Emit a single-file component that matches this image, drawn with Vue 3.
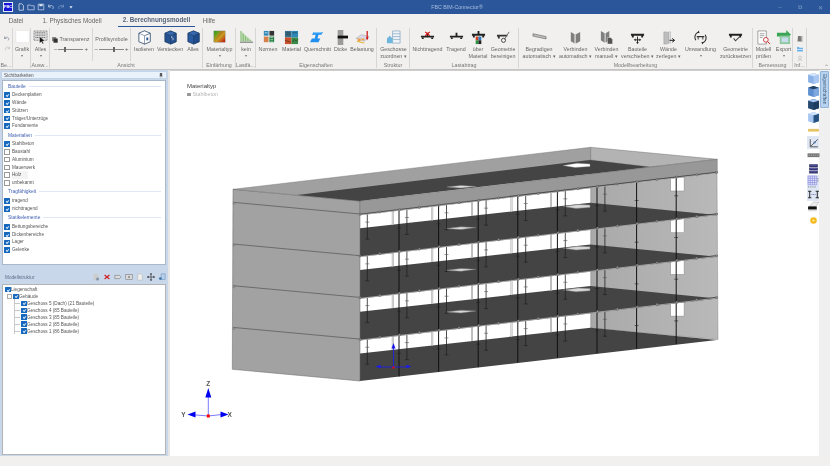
<template>
  <div class="app">
    <header class="titlebar">
      <div class="logo">FBC</div>
      <div class="qat">
        <svg v-for="q in qat" :key="q" viewBox="0 0 10 10" class="qat-icon" v-html="icons[q]"></svg>
      </div>
      <div class="app-title">FBC BIM-Connector®</div>
      <div class="win-btns">
        <span>&#8211;</span>
        <span>&#10697;</span>
        <span>&#10005;</span>
      </div>
    </header>

    <nav class="tabs">
      <span class="tab" style="width: 32px">Datei</span>
      <span class="tab" style="width: 76px">1. Physisches Modell</span>
      <span class="tab active" style="width: 77px">2. Berechnungsmodell</span>
      <span class="tab" style="width: 28px">Hilfe</span>
    </nav>

    <section class="ribbon">
      <div v-for="(g, gi) in groups" :key="gi" class="group" :style="{ width: g.w + 'px' }">
        <div class="items">
          <div v-for="(it, i) in g.items" :key="i" class="item" :class="it.sep ? 'sep' : ''" :style="{ width: it.w + 'px' }">
            <template v-if="it.stack">
              <svg v-for="s in it.stack" :key="s" class="stack-icon" viewBox="0 0 16 16" v-html="icons[s]"></svg>
            </template>
            <template v-else-if="it.slider">
              <div class="slider-title">
                <svg v-if="it.swatch" class="swatch" viewBox="0 0 10 10" v-html="icons.swatch"></svg>
                {{ it.slider }}
              </div>
              <div class="slider">
                <span>&#8211;</span>
                <i class="track"><b :style="{ left: it.pos + 'px' }"></b></i>
                <span>+</span>
              </div>
            </template>
            <template v-else>
              <svg class="icon" viewBox="0 0 16 16" v-html="icons[it.icon]"></svg>
              <span v-for="l in it.text" :key="l" class="lbl">{{ l }}</span>
              <span v-if="it.caret" class="caret">&#9662;</span>
            </template>
          </div>
        </div>
        <div class="group-label">{{ g.label }}</div>
      </div>
      <span class="collapse">&#8963;</span>
    </section>

    <main class="main">
      <aside class="side">
        <div class="dock-head">
          <span>Sichtbarkeiten</span>
          <svg class="pin" viewBox="0 0 6 8"><path d="M1.5 0h3v4l1 1H.5l1-1zM3 5v3" fill="#555" stroke="#555" stroke-width=".5" /></svg>
        </div>
        <div class="vis-box">
          <div v-for="sec in visibility" :key="sec.title">
            <div class="vis-title"><span>{{ sec.title }}</span><i></i></div>
            <label v-for="r in sec.rows" :key="r[0]" class="check-row" :class="r[0] === 'Holz' ? 'hover' : ''">
              <span class="cb" :class="r[1] ? 'on' : ''"></span>{{ r[0] }}
            </label>
          </div>
        </div>
        <div class="model-head">
          <span>Modellstruktur</span>
          <div class="model-tools">
            <svg v-for="t in modelTools" :key="t" viewBox="0 0 10 10" v-html="icons[t]"></svg>
          </div>
        </div>
        <div class="tree">
          <div v-for="n in tree" :key="n.t" class="tree-row" :class="'lvl' + n.l">
            <span v-if="n.l === 1" class="expander"></span>
            <i v-if="n.l === 2" class="branch"></i>
            <span class="cb on"></span>{{ n.t }}
          </div>
        </div>
      </aside>

      <div class="viewport">
        <div class="legend">
          <div class="legend-title">Materialtyp</div>
          <div class="legend-row"><i></i>Stahlbeton</div>
        </div>
        <svg class="scene" viewBox="170 71 649 385">
          <defs>
            <linearGradient id="backWall" x1="0" x2="1" y1="0" y2="0">
              <stop offset="0" stop-color="#a9a9a9" />
              <stop offset="1" stop-color="#b9b9b9" />
            </linearGradient>
          </defs>
          <!-- rueckwand -->
          <polygon points="590.7,160 717,172 718,339.5 590.7,328" fill="url(#backWall)" stroke="#777" stroke-width=".4" />
          <rect v-for="o in offs" :key="'d' + o" x="670.7" :y="177 + o" width="13.4" height="14" fill="#fff" stroke="#8a8a8a" stroke-width=".5" />
          <!-- decken -->
          <polygon v-for="o in offs" :key="'f' + o" :points="pts([[360, 228.3 + o], [590.5, 202.7 + o], [717, 215 + o], [360, 256 + o]])" fill="#444" />
          <polygon v-for="h in floorHoles" :key="h.k" :points="pts(h.p)" fill="#d8d8d8" stroke="#777" stroke-width=".5" />
          <!-- aussen links -->
          <polygon points="233,189.3 360,201 360,381 232.3,369.3" fill="#a2a2a2" stroke="#666" stroke-width=".5" />
          <line v-for="o in offs" :key="'l' + o" x1="233" :y1="202.3 + o" x2="360" :y2="214 + o" stroke="#555" stroke-width=".7" />
          <circle v-for="o in offs" :key="'lc' + o" cx="234" :cy="203.5 + o" r="1" fill="#aaa" stroke="#555" stroke-width=".4" />
          <!-- dach -->
          <polygon points="233,189.3 590.7,147.3 590.7,160 360,201" fill="#a0a0a0" stroke="#666" stroke-width=".4" />
          <polygon points="590.7,147.3 717.3,159.3 650,167 590.7,160" fill="#b3b3b3" stroke="#666" stroke-width=".4" />
          <polygon points="297,195 590,160 650,167 360,201" fill="#444" />
          <polygon points="447,187 461,185.400 476,186.500 461,188" fill="#ddd" stroke="#888" stroke-width=".4" />
          <polygon points="563,165.500 577,163.200 590,164 590,166.500 575,167.500" fill="#fff" stroke="#888" stroke-width=".4" />
          <polygon points="360,201 717.3,159.3 717.3,172 360,214" fill="#989898" stroke="#666" stroke-width=".4" />
          <!-- stuetzen -->
          <g v-for="p in pillars" :key="p.k">
            <line :x1="p.x" :y1="p.y1" :x2="p.x" :y2="p.y2" stroke="#8a8a8a" stroke-width="1.700" />
            <line :x1="p.x" :y1="p.y1" :x2="p.x" :y2="p.y2" stroke="#f4f4f4" stroke-width=".8" />
          </g>
          <line v-for="c in shortCols" :key="c.k" :x1="c.x" :y1="c.y" :x2="c.x" :y2="c.y + 26" stroke="#222" stroke-width=".8" />
          <line v-for="c in shortCols" :key="c.k + 't'" :x1="c.x - 2" :y1="c.y + 26" :x2="c.x + 2" :y2="c.y + 26" stroke="#222" stroke-width=".7" />
          <line v-for="c in shortCols" :key="c.k + 'm'" :x1="c.x - 2" :y1="c.y + 9" :x2="c.x + 2" :y2="c.y + 9" stroke="#555" stroke-width=".6" />
          <line v-for="c in longCols" :key="c.k" :x1="c.x" :y1="c.y1" :x2="c.x" :y2="c.y2" stroke="#111" stroke-width="1" />
          <line v-for="t in longTicks" :key="t.k" :x1="t.x - 2" :y1="t.y" :x2="t.x + 2" :y2="t.y" stroke="#222" stroke-width=".6" />
          <!-- unterzuege -->
          <g v-for="o in offs" :key="'b' + o">
            <line x1="360" :y1="214.5 + o" x2="717.5" :y2="172.5 + o" stroke="#444" stroke-width="1.700" />
            <line x1="360" :y1="215 + o" x2="717.5" :y2="173 + o" stroke="#ddd" stroke-width=".6" />
          </g>
          <circle v-for="n in nodes" :key="n.k" :cx="n.x" :cy="n.y" r="1.100" fill="#999" stroke="#444" stroke-width=".4" />
          <!-- lokale achsen -->
          <g stroke="#1a1af0" fill="#1a1af0">
            <line x1="393.5" y1="367.5" x2="393.5" y2="347" stroke-width=".8" />
            <line x1="379" y1="367" x2="408" y2="367" stroke-width=".8" />
            <path d="M393.5 343l-2 5.500h4zM375.500 366.500l5-1.800v3.600zM411.500 366.500l-5-1.800v3.600z" stroke="none" />
          </g>
          <rect x="392.5" y="366.5" width="2" height="2" fill="#f00" />
          <!-- koordinatensystem -->
          <g stroke="#2222ff" fill="#0000f0">
            <line x1="208.3" y1="416" x2="208.3" y2="392" stroke="#7a7aff" stroke-width="1" />
            <line x1="190" y1="414.5" x2="208.3" y2="416" stroke="#7a7aff" stroke-width="1" />
            <line x1="208.3" y1="416" x2="222" y2="414.5" stroke="#7a7aff" stroke-width="1" />
            <path d="M208.300 388l-3 9.500h6zM187.500 414.500l8-3v6zM228.500 414.500l-8-3v6z" stroke="none" />
          </g>
          <rect x="206.8" y="414.5" width="3" height="3" fill="#f00" />
          <text x="208.3" y="386" class="axis" text-anchor="middle">Z</text>
          <text x="183.5" y="416.5" class="axis" text-anchor="middle">Y</text>
          <text x="229.7" y="416.5" class="axis" text-anchor="middle">X</text>
        </svg>
        <div class="view-tools">
          <div v-for="(t, i) in viewTools" :key="i" class="vt" :class="t.on ? 'on' : ''">
            <svg viewBox="0 0 12 12" v-html="icons[t.i]"></svg>
          </div>
        </div>
      </div>

      <div class="rail">
        <div class="rail-tab">Eigenschaften</div>
      </div>
    </main>

    <footer class="status"></footer>
  </div>
</template>

<script setup>
const beam = '<path d="M1 6h14v2H1zM7 3h2v3H7z" fill="#222"/><path d="M2 8h2v1.500H2zM12 8h2v1.500h-2z" fill="#222"/>';
const cube = (a, b, c) => `<path d="M8 1l6 2.500v9L8 15l-6-2.500v-9z" fill="${c}" stroke="#17375e" stroke-width=".8"/><path d="M8 6l6-2.500v9L8 15z" fill="${a}" stroke="#17375e" stroke-width=".5"/><path d="M8 1l6 2.500L8 6 2 3.500z" fill="${b}" stroke="#17375e" stroke-width=".5"/>`;
const small = (top, left, right) => `<path d="M6 1l5 1.500v7L6 11 1 9.500v-7z" fill="${left}"/><path d="M6 4l5-1.500v7L6 11z" fill="${right}"/><path d="M6 1l5 1.500L6 4 1 2.500z" fill="${top}"/>`;

const icons = {
  page: '<path d="M2.500 1h3.500l2 2v6h-5.500z" fill="none" stroke="#fff" stroke-width=".8"/>',
  open: '<path d="M1 2.500h3l1 1h4v5H1z" fill="none" stroke="#dfe8f5" stroke-width=".8"/>',
  save: '<path d="M1.500 1.500h7v7h-7z" fill="none" stroke="#dfe8f5" stroke-width=".8"/><path d="M3 1.500h4v2.500H3z" fill="#dfe8f5"/>',
  undoW: '<path d="M2 4.500c2-2 5-2 6 1l-1 2M2 2v3h3" fill="none" stroke="#dfe8f5" stroke-width=".8"/>',
  redoW: '<path d="M8 4.500c-2-2-5-2-6 1l1 2M8 2v3H5" fill="none" stroke="#8fa9d0" stroke-width=".8"/>',
  more: '<path d="M3 4h4L5 7z" fill="#dfe8f5"/>',
  undo: '<path d="M3 7c3-4 8-3 9 1l-2 3M3 3v4h4" fill="none" stroke="#7c8a9a" stroke-width="1.400"/>',
  redo: '<path d="M13 7c-3-4-8-3-9 1l2 3M13 3v4H9" fill="none" stroke="#b9c0c8" stroke-width="1.400"/>',
  white: '<rect x="1" y=".5" width="14" height="13" fill="#fff" stroke="#d8d8d8" stroke-width=".4"/>',
  select: '<rect x="1" y="1" width="14" height="10" fill="#ddd" stroke="#555" stroke-width=".7" stroke-dasharray="1 .6"/><path d="M2.500 3h11M2.500 5.500h11M2.500 8h11" stroke="#666" stroke-dasharray="1.200 .6"/><path d="M7 7l0 7 2-1.500 1.200 2.500 1.200-.6-1.200-2.400 2.500-.3z" fill="#111" stroke="#fff" stroke-width=".4"/>',
  swatch: '<rect x="0" y="0" width="7" height="7" fill="#888"/><rect x="2.500" y="2.500" width="7" height="7" fill="#333"/>',
  isolate: cube('#fff', '#fff', '#fff') + '<path d="M10 8h2v3h-2z" fill="#27518f"/>',
  hide: cube('#27518f', '#3868ad', '#27518f') + '<path d="M10 6.500c-1.500 0-1.500 2 0 2s1.500 2 0 2" fill="none" stroke="#dfe8f5" stroke-width=".7"/>',
  all: cube('#204c8c', '#3868ad', '#2a5a9f'),
  mat: '<defs><linearGradient id="gr1" x1="0" x2="1" y1="0" y2="1"><stop offset="0" stop-color="#20a020"/><stop offset=".55" stop-color="#c8a020"/><stop offset="1" stop-color="#c01010"/></linearGradient></defs><rect x="2" y="1" width="12" height="12" fill="url(#gr1)" stroke="#666" stroke-width=".3"/><path d="M2 13l7-12h5z" fill="#e34a1a" opacity=".35"/>',
  load: '<path d="M2 1l12 11H2z" fill="#bcdcb0"/><path d="M2 1v11M4.500 4v8M7 6.500V12M9.500 8.500V12M12 10.500V12" stroke="#6fae5f" stroke-width=".8"/><path d="M1 13h14" stroke="#555" stroke-width=".9"/>',
  norm: '<rect x="3" y="1" width="5" height="5" fill="#2e8ab8"/><rect x="9" y="1" width="5" height="5" fill="#333"/><rect x="3" y="7" width="5" height="6" fill="#d8804a"/><path d="M9 7h5v6H9z" fill="#1a7a3a"/><path d="M10 8h3M10 10h3M10 12h3" stroke="#fff" stroke-width=".6"/><path d="M4 3h3" stroke="#fff" stroke-width=".7"/>',
  material: '<rect x="1" y="1" width="7" height="7" fill="#38708c"/><rect x="8" y="1" width="7" height="7" fill="#2c88b8"/><rect x="1" y="8" width="7" height="7" fill="#c8502a"/><rect x="8" y="8" width="7" height="7" fill="#3a8a48"/><path d="M2 3h5M2 5h5M9 3h5M1 11l6 2M9 13l2-3 2 2 2-2" stroke="#222" stroke-width=".5" fill="none"/>',
  section: '<path d="M4 2h10l-2 3H9l-1 4h3l-2 4H0l2-4h3l1-4H2z" fill="#1f8ff0"/><path d="M4 2h10l-2 1.500H4z" fill="#7cc6ff"/>',
  thick: '<rect x="5" y="0" width="6" height="16" fill="#9a9a9a"/><rect x="5" y="6" width="11" height="3" fill="#111"/>',
  loadB: '<path d="M1 9l6-4 8 2-5 5z" fill="#d8d8e8" stroke="#888" stroke-width=".4"/><path d="M3 9h3v3H3zM7 9h3v2H7z" fill="#f0a040"/><path d="M13 1v8" stroke="#d01010" stroke-width="1.300"/><path d="M11.500 8h3L13 11z" fill="#d01010"/><path d="M2 12l8 2" stroke="#e0b020"/>',
  storey: '<path d="M7 1h8v13H7z" fill="#eef3f8" stroke="#7fa0bb" stroke-width=".7"/><path d="M7 4h8M7 7h8M7 10h8" stroke="#7fa0bb" stroke-width=".7"/><path d="M1 9l3-3 3 3v5H1z" fill="#6fb6de"/>',
  nontr: beam + '<path d="M5.500 2l5 4M10.500 2l-5 4" stroke="#e01010" stroke-width="1.300"/>',
  tr: beam,
  overMat: '<path d="M1 4h14v2H1zM7 1h2v3H7zM2 6h2v2H2zM12 6h2v2h-2z" fill="#222"/><rect x="5" y="7" width="3" height="4" fill="#d04020"/><rect x="8" y="7" width="3" height="4" fill="#2a7ac0"/><rect x="5" y="11" width="3" height="4" fill="#2a9040"/><rect x="8" y="11" width="3" height="4" fill="#222"/>',
  clean: '<path d="M1 5h11v2H1zM2 7h2v2H2z" fill="#333"/><path d="M14 2L9 10" stroke="#666" stroke-width="1"/><circle cx="8" cy="11" r="2.200" fill="none" stroke="#444"/>',
  straight: '<path d="M1 4l14 3v2.500L1 6.500z" fill="#c0c0c0" stroke="#555" stroke-width=".6"/>',
  conn: '<path d="M3 2l4 2.500v10L3 12zM13 2L8.500 4.500v10l4.500-2.500z" fill="#7f7f7f"/><path d="M7 4.500h1.500v10H7z" fill="#c4c4c4"/>',
  connM: '<path d="M2 1l4 2.500v10L2 11zM11 1L7 3.500v10l4-2.500z" fill="#7f7f7f"/><path d="M9 8h3.500l2 2v5H9z" fill="#555" stroke="#fff" stroke-width=".4"/>',
  move: '<path d="M1 4h14v2H1zM2 6h2v2H2zM12 6h2v2h-2z" fill="#222"/><path d="M8 7v7M5.500 10.500h5" stroke="#222"/><path d="M8 15l-1.500-2h3zM4 10.500l2-1.500v3zM12 10.500l-2-1.500v3z" fill="#222"/>',
  split: '<path d="M3 2h3l2 1v11l-2 1H3z" fill="#bdbdbd" stroke="#888" stroke-width=".4"/><path d="M8 2h2v12H8z" fill="#e0e0e0" stroke="#888" stroke-width=".4"/><path d="M9 11h5M12 9l2.500 2L12 13" fill="none" stroke="#111" stroke-width="1"/>',
  conv: '<path d="M3 11a6 6 0 0 1 3-9M13 5a6 6 0 0 1-3 9" fill="none" stroke="#222" stroke-width="1.100"/><path d="M6 .500l1 2.500-2.500.5zM10 15.500l-1-2.500 2.500-.5z" fill="#222"/><path d="M4 6.500h8v1.200H4zM5 7.700h1v2.500H5zM10 7.700h1v2.500h-1z" fill="#333"/>',
  reset: '<path d="M1 4h14v2H1zM2 6h2v2H2zM12 6h2v2h-2z" fill="#222"/><path d="M6 9l2 2.500 4-4" fill="none" stroke="#444" stroke-width="1.100"/>',
  check: '<path d="M2 1h9v14H2z" fill="#fff" stroke="#777" stroke-width=".7"/><path d="M4 4h5M4 6h5M4 8h3" stroke="#777" stroke-width=".7"/><circle cx="10.500" cy="10.500" r="2.500" fill="#fff" stroke="#c02020" stroke-width=".9"/><path d="M12.500 12.500l2.500 2.500" stroke="#c02020"/>',
  export: '<path d="M1 3h10V0l5 5-5 4V7H1z" fill="#3aa655"/><rect x="4" y="6" width="11" height="9" fill="#8fc8a0"/><rect x="6" y="8" width="7" height="5" fill="#c8dcee"/>',
  book: '<path d="M4 2h8l-1 11H3z" fill="#777"/><path d="M9 2h4v12h-2z" fill="#aaa"/>',
  folder: '<path d="M2 4h4l1 1.500h7V13H2z" fill="#6db2e8"/><path d="M2 8h12v1.200H2z" fill="#fff"/>',
  person: '<circle cx="8" cy="5" r="3" fill="none" stroke="#a0a8b0"/><path d="M3 14c0-6 10-6 10 0z" fill="none" stroke="#a0a8b0"/>',
  fileAdd: '<path d="M2 1h4l2 2v6H2z" fill="#ccc"/><circle cx="7" cy="7.500" r="2" fill="#89a"/>',
  del: '<path d="M2 2.500l6 5M8 2.500l-6 5" stroke="#d02020" stroke-width="1.400"/>',
  tag: '<path d="M1 3h6l2 2-2 2H1z" fill="#ddd" stroke="#666" stroke-width=".6"/>',
  img: '<rect x="1" y="2" width="8" height="6" fill="#ddd" stroke="#666" stroke-width=".6"/><circle cx="5" cy="5" r="1.500" fill="#999"/>',
  paste: '<path d="M2 1h4l2 2v6H2z" fill="#eee" stroke="#aaa" stroke-width=".6"/>',
  moveB: '<path d="M5 .500v9M.500 5h9" stroke="#333" stroke-width=".8"/><path d="M5 0l1.500 2h-3zM5 10l1.500-2h-3zM0 5l2-1.500v3zM10 5L8 3.500v3z" fill="#333"/>',
  search: '<path d="M4 1h5v7H4z" fill="#b8d0ec" stroke="#47a" stroke-width=".5"/><circle cx="3" cy="7" r="1.800" fill="#47a"/>',
  v1: small('#d5e6fb', '#8db2e8', '#a9c8f2'),
  v2: small('#23405f', '#5d8fd1', '#7fa8df'),
  v3: small('#a8c8f4', '#24486f', '#1d3c60'),
  v4: small('#cfe2fa', '#a6c6f0', '#25517f'),
  bar: '<rect x="1" y="4.500" width="10" height="2.500" fill="#e8c468"/>',
  dim: '<path d="M3 10L10 3M3 3v7h7" fill="none" stroke="#555" stroke-width=".9"/><circle cx="7" cy="6" r="1" fill="#47a"/>',
  grey: '<rect x=".5" y="4" width="11" height="3.500" fill="#777"/><path d="M1.500 5.700h9" stroke="#ccc" stroke-dasharray="1 1" stroke-width=".7"/>',
  coil: '<path d="M2 2h8v2.500H2zM2 5h8v2.500H2zM2 8h8v2.500H2z" fill="#34346e"/><path d="M3 3h6M3 6h6M3 9h6" stroke="#6a6ac0" stroke-width=".6"/>',
  grid: '<path d="M1 1h8v8H1zM1 3h8M1 5h8M1 7h8M3 1v8M5 1v8M7 1v8" fill="none" stroke="#7a7ae0" stroke-width=".5"/><path d="M10 3v3M1 11h7" stroke="#555" stroke-dasharray="1 1" stroke-width=".7"/>',
  ii: '<path d="M1 3h3M2.500 3v6M1 9h3M8 3h3M9.500 3v6M8 9h3" stroke="#222" stroke-width=".9"/><path d="M4 6h4" stroke="#66a" stroke-width=".7" stroke-dasharray="1 .5"/>',
  erase: '<path d="M2 5l4-4h5L8 5z" fill="#eee" stroke="#999" stroke-width=".4"/><path d="M1 5h8v3H1z" fill="#111"/><path d="M1 8h8v1.500H1z" fill="#ddd"/>',
  coin: '<circle cx="6" cy="6" r="3" fill="#f4b91e"/><circle cx="6" cy="6" r="1" fill="#fff0b0"/>',
};

const qat = ['page', 'open', 'save', 'undoW', 'redoW', 'more'];

const groups = [
  { label: 'Be...', w: 13, items: [{ w: 13, stack: ['undo', 'redo'] }] },
  { label: '', w: 18, items: [{ w: 18, icon: 'white', text: ['Grafik'], caret: true }] },
  { label: 'Ausw...', w: 19, items: [{ w: 19, icon: 'select', text: ['Alles'], caret: true }] },
  {
    label: 'Ansicht', w: 153, items: [
      { w: 43, slider: 'Transparenz', swatch: true, pos: 6, sep: true },
      { w: 38, slider: 'Profilsymbole', pos: 14, sep: true },
      { w: 26, icon: 'isolate', text: ['Isolieren'] },
      { w: 26, icon: 'hide', text: ['Verstecken'] },
      { w: 20, icon: 'all', text: ['Alles'] },
    ],
  },
  { label: 'Einfärbung', w: 33, items: [{ w: 33, icon: 'mat', text: ['Materialtyp'], caret: true }] },
  { label: 'Lastfä...', w: 20, items: [{ w: 20, icon: 'load', text: ['kein'], caret: true }] },
  {
    label: 'Eigenschaften', w: 121, items: [
      { w: 24, icon: 'norm', text: ['Normen'] },
      { w: 23, icon: 'material', text: ['Material'] },
      { w: 29, icon: 'section', text: ['Querschnitt'] },
      { w: 17, icon: 'thick', text: ['Dicke'] },
      { w: 26, icon: 'loadB', text: ['Belastung'] },
    ],
  },
  { label: 'Struktur', w: 33, items: [{ w: 33, icon: 'storey', text: ['Geschosse', 'zuordnen ▾'] }] },
  {
    label: 'Lastabtrag', w: 109, items: [
      { w: 35, icon: 'nontr', text: ['Nichttragend'] },
      { w: 22, icon: 'tr', text: ['Tragend'] },
      { w: 22, icon: 'overMat', text: ['über', 'Material'] },
      { w: 28, icon: 'clean', text: ['Geometrie', 'bereinigen'] },
    ],
  },
  {
    label: 'Modellbearbeitung', w: 234, items: [
      { w: 40, icon: 'straight', text: ['Begradigen', 'automatisch ▾'] },
      { w: 33, icon: 'conn', text: ['Verbinden', 'automatisch ▾'] },
      { w: 29, icon: 'connM', text: ['Verbinden', 'manuell ▾'] },
      { w: 33, icon: 'move', text: ['Bauteile', 'verschieben ▾'] },
      { w: 29, icon: 'split', text: ['Wände', 'zerlegen ▾'] },
      { w: 35, icon: 'conv', text: ['Umwandlung'], caret: true },
      { w: 35, icon: 'reset', text: ['Geometrie', 'zurücksetzen'] },
    ],
  },
  {
    label: 'Bemessung', w: 40, items: [
      { w: 21, icon: 'check', text: ['Modell', 'prüfen'] },
      { w: 19, icon: 'export', text: ['Export'], caret: true },
    ],
  },
  { label: 'Inf...', w: 14, items: [{ w: 14, stack: ['book', 'folder', 'person'] }] },
];

const visibility = [
  { title: 'Bauteile', rows: [['Deckenplatten', 1], ['Wände', 1], ['Stützen', 1], ['Träger/Unterzüge', 1], ['Fundamente', 1]] },
  { title: 'Materialien', rows: [['Stahlbeton', 1], ['Baustahl', 0], ['Aluminium', 0], ['Mauerwerk', 0], ['Holz', 0], ['unbekannt', 0]] },
  { title: 'Tragfähigkeit', rows: [['tragend', 1], ['nichttragend', 1]] },
  { title: 'Statikelemente', rows: [['Bettungsbereiche', 1], ['Dickenbereiche', 1], ['Lager', 1], ['Gelenke', 1]] },
];

const modelTools = ['fileAdd', 'del', 'tag', 'img', 'paste', 'moveB', 'search'];

const tree = [
  { t: 'Liegenschaft', l: 0 },
  { t: 'Gebäude', l: 1 },
  { t: 'Geschoss 5 (Dach) (21 Bauteile)', l: 2 },
  { t: 'Geschoss 4 (85 Bauteile)', l: 2 },
  { t: 'Geschoss 3 (85 Bauteile)', l: 2 },
  { t: 'Geschoss 2 (85 Bauteile)', l: 2 },
  { t: 'Geschoss 1 (86 Bauteile)', l: 2 },
];

const viewTools = [
  { i: 'v1' }, { i: 'v2' }, { i: 'v3' }, { i: 'v4' }, { i: 'bar' }, { i: 'dim', on: true },
  { i: 'grey' }, { i: 'coil' }, { i: 'grid', on: true }, { i: 'ii', on: true }, { i: 'erase' }, { i: 'coin' },
];

// Gebaeude: Geschosse wiederholen sich mit festem Versatz
const STEP = 41.7;
const offs = [0, STEP, STEP * 2, STEP * 3];
const pts = (list) => list.map((p) => p.join(',')).join(' ');
const slabY = (x, o) => 214 - 0.1176 * (x - 360) + o;
const floorY = (x, o) => 228.3 - 0.111 * (x - 360) + o;
const bottomY = (x) => 381 - 0.1165 * (x - 360);

const floorHoles = [];
offs.slice(0, 3).forEach((o) => {
  floorHoles.push({ k: 'a' + o, p: [[446, 228.6 + o], [461, 226.8 + o], [476, 227.6 + o], [461, 229.6 + o]] });
  floorHoles.push({ k: 'b' + o, p: [[563, 206.6 + o], [578, 204.6 + o], [590, 205 + o], [590, 207.4 + o], [576, 208.4 + o]] });
});

const longCols = [];
const longTicks = [];
const shortCols = [];
const pillars = [];
const nodes = [];
for (let n = 0; n < 8; n++) {
  const x = 399 + 39.6 * n;
  longCols.push({ k: 'lc' + n, x, y1: slabY(x, 0), y2: bottomY(x) });
  offs.forEach((o) => longTicks.push({ k: `t${n}-${o}`, x, y: slabY(x, o) + 19 }));
}
offs.forEach((o) => {
  for (let n = 0; n < 7; n++) {
    const x = 367.3 + 39.6 * n;
    shortCols.push({ k: `s${n}-${o}`, x, y: slabY(x, o) });
  }
  for (let n = 0; n < 5; n++) {
    const x = 392.7 + 39.6 * n;
    pillars.push({ k: `p${n}-${o}`, x, y1: slabY(x, o), y2: floorY(x, o) });
  }
  for (let x = 360; x < 718; x += 19.8) {
    nodes.push({ k: `n${x}-${o}`, x, y: slabY(x, o) + 0.3 });
  }
});
</script>

<style scoped>
.app {
  width: 830px;
  height: 466px;
  display: flex;
  flex-direction: column;
  overflow: hidden;
  background: #f1f0ef;
  font-family: "Liberation Sans", Arial, sans-serif;
  color: #555;
  filter: blur(0.3px);
}

.titlebar {
  height: 14px;
  flex: none;
  display: flex;
  align-items: center;
  background: #2b579a;
  position: relative;
}
.logo {
  width: 10px;
  height: 10px;
  margin-left: 3px;
  background: #1414d8;
  border: 1px solid #dfe6f5;
  box-sizing: border-box;
  color: #fff;
  font-size: 4px;
  font-weight: bold;
  line-height: 8px;
  text-align: center;
}
.qat {
  display: flex;
  gap: 2px;
  margin-left: 4px;
}
.qat-icon {
  width: 8px;
  height: 8px;
}
.app-title {
  position: absolute;
  left: 0;
  right: 0;
  top: 3px;
  padding-left: 84px;
  text-align: center;
  font-size: 5.300px;
  line-height: 8px;
  color: #a7bcdc;
}
.win-btns {
  margin-left: auto;
  width: 60px;
  display: flex;
  font-size: 6px;
  color: #7f9cc6;
}
.win-btns span {
  width: 20px;
  text-align: center;
}

.tabs {
  height: 13px;
  flex: none;
  display: flex;
  background: #f1f0ef;
  font-size: 6.300px;
  color: #666;
}
.tab {
  margin-right: 2px;
  text-align: center;
  line-height: 13px;
  white-space: nowrap;
}
.tab.active {
  margin-left: 6px;
  margin-right: 0;
  font-weight: bold;
  color: #56657a;
  border-bottom: 1px solid #2b579a;
  box-sizing: border-box;
  line-height: 12px;
}

.ribbon {
  height: 43px;
  flex: none;
  display: flex;
  background: #f1f0ef;
  border-bottom: 1px solid #c4c4c4;
  box-sizing: border-box;
  position: relative;
}
.group {
  flex: none;
  display: flex;
  flex-direction: column;
  border-right: 1px solid #d6d6d6;
  box-sizing: border-box;
  margin: 1px 0;
}
.items {
  height: 33px;
  flex: none;
  display: flex;
  overflow: hidden;
}
.item {
  flex: none;
  display: flex;
  flex-direction: column;
  align-items: center;
  padding-top: 2px;
  box-sizing: border-box;
}
.item.sep {
  border-right: 1px solid #d6d6d6;
}
.icon {
  width: 15px;
  height: 15px;
  flex: none;
}
.stack-icon {
  width: 8px;
  height: 8px;
  margin-bottom: 2px;
  flex: none;
}
.stack-icon:first-child {
  margin-top: 5px;
}
.lbl {
  font-size: 5.300px;
  line-height: 7px;
  white-space: nowrap;
  color: #666;
}
.icon + .lbl {
  margin-top: 1px;
}
.caret {
  font-size: 4px;
  line-height: 6px;
  color: #777;
}
.slider-title {
  display: flex;
  align-items: center;
  gap: 1px;
  margin-top: 6px;
  font-size: 5.400px;
  white-space: nowrap;
  color: #666;
  line-height: 7px;
}
.swatch {
  width: 6px;
  height: 6px;
}
.slider {
  display: flex;
  align-items: center;
  gap: 1px;
  margin-top: 3px;
  font-size: 6px;
  line-height: 7px;
  color: #555;
}
.track {
  position: relative;
  display: block;
  width: 25px;
  height: 1px;
  background: #888;
}
.track b {
  position: absolute;
  top: -2px;
  width: 2px;
  height: 5px;
  background: #666;
}
.group-label {
  height: 8px;
  font-size: 5.300px;
  line-height: 8px;
  text-align: center;
  color: #777;
  white-space: nowrap;
}
.collapse {
  position: absolute;
  right: 1px;
  bottom: -1px;
  font-size: 6px;
  color: #888;
}

.main {
  flex: 1;
  min-height: 0;
  display: flex;
}

.side {
  width: 170px;
  flex: none;
  display: flex;
  flex-direction: column;
  background: #c9d7ea;
  box-sizing: border-box;
  padding-top: 1px;
  border-right: 2px solid #e6e6e6;
}
.dock-head {
  height: 8px;
  flex: none;
  margin: 0 1px;
  padding: 0 3px 0 2px;
  display: flex;
  justify-content: space-between;
  align-items: center;
  background: #e9f2fb;
  border: 1px solid #c3d4e6;
  box-sizing: border-box;
  font-size: 4.700px;
  color: #555;
}
.pin {
  width: 4px;
  height: 5px;
}
.vis-box {
  height: 185px;
  flex: none;
  margin: 1px 2px 0;
  padding: 0 1px;
  background: #fff;
  border: 1px solid #a9b8c8;
  box-sizing: border-box;
}
.vis-title {
  height: 10.300px;
  display: flex;
  align-items: center;
  gap: 3px;
  padding-left: 4px;
  font-size: 4.900px;
  color: #3f5fb0;
}
.vis-title i {
  flex: 1;
  height: 1px;
  margin-right: 3px;
  background: #dfe6f5;
}
.check-row {
  height: 7.750px;
  display: flex;
  align-items: center;
  gap: 2.500px;
  font-size: 4.650px;
  line-height: 7.750px;
  color: #555;
}
.check-row.hover {
  background: linear-gradient(90deg, #fff 0, #fff 8px, #f3f3f3 8px, #f3f3f3 24px, #fff 24px);
}
.cb {
  position: relative;
  width: 5.500px;
  height: 5.500px;
  flex: none;
  box-sizing: border-box;
  border: 0.6px solid #999;
  background: #fff;
  border-radius: 0.5px;
}
.cb.on {
  background: #1668bd;
  border-color: #1668bd;
}
.cb.on::after {
  content: "";
  position: absolute;
  left: 1.200px;
  top: 0.800px;
  width: 2.400px;
  height: 1.200px;
  border-left: 0.5px solid #cfe2f7;
  border-bottom: 0.5px solid #cfe2f7;
  transform: rotate(-45deg);
}
.model-head {
  height: 19px;
  flex: none;
  padding: 5px 2px 0 5px;
  box-sizing: border-box;
  display: flex;
  align-items: center;
  justify-content: space-between;
  font-size: 4.700px;
  color: #5a6e8a;
}
.model-tools {
  display: flex;
  gap: 3px;
}
.model-tools svg {
  width: 8px;
  height: 8px;
}
.tree {
  flex: 1;
  margin: 0 2px 1px 2px;
  padding: 1px 2px 1px 2px;
  background: #fff;
  border: 1px solid #b4b4b4;
  box-sizing: border-box;
}
.tree-row {
  height: 6.950px;
  display: flex;
  align-items: center;
  font-size: 4.650px;
  color: #555;
  white-space: nowrap;
}
.tree-row .cb {
  margin-right: 0.500px;
}
.lvl1 {
  padding-left: 2px;
}
.lvl2 {
  padding-left: 10px;
}
.expander {
  width: 3px;
  height: 3px;
  margin-right: 1px;
  border: 0.5px solid #aaa;
}
.branch {
  position: relative;
  width: 6px;
  height: 0.6px;
  background: #c8c8c8;
  margin-right: 1px;
  margin-left: -1px;
}
.branch::before {
  content: "";
  position: absolute;
  left: 0;
  top: -4px;
  width: 0.6px;
  height: 7px;
  background: #c8c8c8;
}

.viewport {
  position: relative;
  flex: 1;
  min-width: 0;
  display: flex;
  background: #fff;
  border-top: 1px solid #cfcfcf;
}
.scene {
  width: 649px;
  height: 385px;
  flex: none;
}
.axis {
  font-size: 6.500px;
  font-family: "Liberation Sans", Arial, sans-serif;
  fill: #555;
  font-weight: bold;
}
.legend {
  position: absolute;
  left: 17px;
  top: 12px;
}
.legend-title {
  font-size: 6px;
  line-height: 7px;
  color: #444;
}
.legend-row {
  display: flex;
  align-items: center;
  gap: 2px;
  font-size: 5.300px;
  line-height: 9px;
  color: #b5b5b5;
}
.legend-row i {
  width: 3.500px;
  height: 3.500px;
  background: #9a9a9a;
}
.view-tools {
  position: absolute;
  right: 0;
  top: 1px;
  display: flex;
  flex-direction: column;
  align-items: center;
  width: 12px;
}
.vt {
  width: 12px;
  height: 12.900px;
  display: flex;
  align-items: center;
  justify-content: center;
}
.vt.on {
  background: #dfe7f5;
}
.vt svg {
  width: 13px;
  height: 13px;
  flex: none;
}

.rail {
  width: 11px;
  flex: none;
  background: #f0f0f0;
  padding-top: 1px;
  box-sizing: border-box;
}
.rail-tab {
  width: 9px;
  height: 37px;
  margin-left: 1px;
  background: #b7d2ee;
  border: 0.5px solid #92b4d8;
  border-radius: 1px;
  box-sizing: border-box;
  writing-mode: vertical-rl;
  font-size: 4.800px;
  line-height: 8px;
  text-align: center;
  color: #3d5878;
}

.status {
  height: 10px;
  flex: none;
  background: #f1f0ef;
}
</style>

<style>
html,
body {
  margin: 0;
  overflow: hidden;
  background: #f1f0ef;
}
</style>
